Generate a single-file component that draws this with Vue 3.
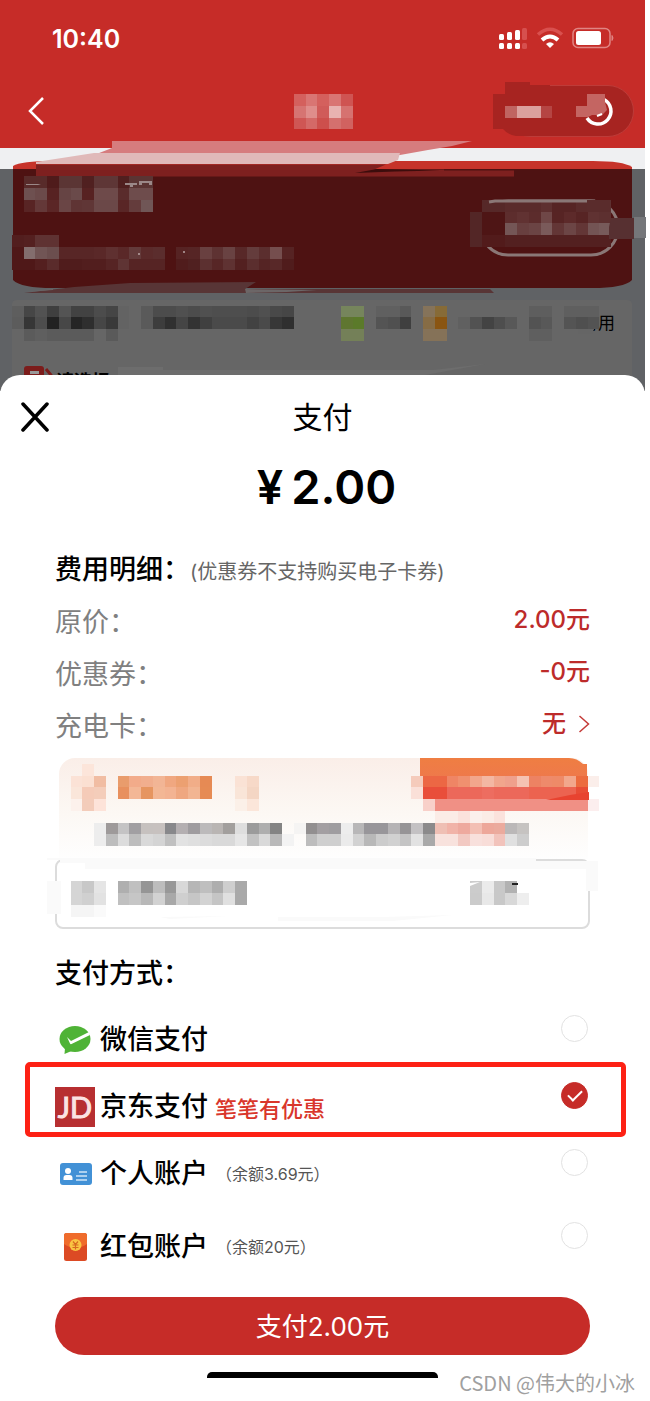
<script setup>
import { ref } from 'vue'

// Blurred regions: [column, row, colours of consecutive cells]; '-' leaves a gap.
const expand = (runs) =>
  runs.flatMap(([col, row, colours]) =>
    colours
      .split(' ')
      .map((fill, i) => ({ x: col + i, y: row, fill: '#' + fill }))
      .filter((cell) => cell.fill !== '#-')
  )

const navCells = expand([
  [25, 8, 'd4605d d97573 d4605d d97573 cf5452'],
  [25, 9, 'd67472 df8d8b d05b59 e8b3b1 d67270'],
  [25, 10, 'cf5654 d46967 cd4f4c d4706e d16260'],
  [43, 9, 'c06461 dba09d dba09d b54543']
])

const sceneCells = expand([
  [2, 15, '582b2a 582b2a 4f1b1b 5b3534 5b3534 502020 5e3636 5e3636 501f1f 5b3433 5b3433'],
  [2, 16, '6e5050 6b4a4a 572222 664444 6a4a4a 572222 6e4a4a 6e4a4a 5a2c2c 6e4c4c 6e4c4c'],
  [2, 17, '582424 643838 5b2626 6a4545 5f3434 603636 6b4848 6b4848 592626 643c3c 705656'],
  [1, 20, '521e1e 542020 5f3232 5f3232'],
  [1, 21, '4f1818 836e6e 715555 6b4e4e 582626 582626 582626 5a2828 5f3030 5a2828 633a3a 5b2a2a 5b2d2d - 562323 562525 694040 5e3232 694242 582828 643c3c 5b2e2e 754e4e 562323'],
  [1, 22, '4f1818 4f1818 541f1f 5a2b2b 501c1c 501c1c 521e1e 521e1e 562424 5f3434 562424 562424 562424 - 501c1c 502020 5c3030 572626 5f3232 532020 5b2e2e 552424 582828 501c1c'],
  [40, 18, '532626 4e1515 4e1515 5d2d2d 613232 5c2c2c 6f4747 572424 5d2a2a 572424 603232 5d3030'],
  [40, 19, '532626 4e1515 4e1515 745656 683f3f 6b4444 7a5a5a 633636 6c4545 633636 735454 775a5a'],
  [40, 20, '532626 521b1b 521b1b 532020 532020 532020 532020 532020 532020 532020 532020 532020'],
  [41, 17, '562828 562828 5a2b2b 5a2b2b 5a2b2b 5e3030 562424 562424 5a2b2b 5a2b2b 5d3030'],
  [1, 26, '5e5e5e 464646 525252 3f3f3f 545454 424242 424242 4c4c4c 454545 636363 - 5a5a5a 4c4c4c 4c4c4c 505050 4c4c4c 505050 4e4e4e 4e4e4e 4e4e4e 4c4c4c 505050 494949 464646'],
  [1, 27, '5c5c5c 363636 4d4d4d 222222 474747 252525 2e2e2e 464646 393939 636363 - 5a5a5a 3d3d3d 303030 454545 333333 404040 4a4a4a 4a4a4a 4a4a4a 424242 4a4a4a 373737 2f2f2f'],
  [2, 28, '5b5b5b 5f5f5f 5b5b5b 5b5b5b 5b5b5b 5b5b5b - 5a5a5a'],
  [29, 26, '76855c 76855c - 606060 606060 595959 - 85735a 876b37 - - - - - - - 5e5e5e 5e5e5e - 5f5f5f 5f5f5f 5f5f5f'],
  [29, 27, '5f7630 5b7a2a - 545454 505050 3f3f3f - 866c45 8a5511 - 606060 525252 434343 4e4e4e 585858 - 535353 585858 - 545454 4f4f4f 535353'],
  [29, 28, '748058 748058 - - - - - 857258 857258 - - - - - - - 5f5f5f 5f5f5f']
])

const promoCells = expand([
  [7, 65, 'fce5da'],
  [6, 66, 'fbe2d6 fbe0d2 f1bda3 - e99c6c f2ab8a f1ae8e f2b595 f0a780 eca071 f1ad88 e68a54 - - fae2d5 f7d9c8'],
  [6, 67, 'fae6da f5cbb8 f4cdba - e8905e f3b796 e69560 f3b795 f3b392 efa780 f2b592 e68b54 - - f9e5d8 f4d6c4'],
  [6, 68, 'fcf1ec f3ccba fde3d9 - - - - - - - - - - - fbf0e8 fbe6da'],
  [35, 66, 'f5cbbb ec6744 ec6744 ef8565 f0906f f2a68c f3b7a3 f1a58c efa08c f5c2b2 ed8263 ee8a6b ee8a68 f2a78c ec6b3e fbeeea'],
  [35, 67, 'fae0d8 e94e3a e94e3a ec685a ec685a ec685a ed6d60 ec685a ec685a ec685a ec6350 ec6350 ec6350 ec6350 e84c35'],
  [36, 68, 'f8d0c9 f09085 f09085 f09085 f09085 f09085 f09085 f09085 f09085 f09085 f09085 f09085 f09085 f09085 fceeee'],
  [37, 69, 'fbece6 fbece6 fbe2dc fbf0ec fbece6 fbe2dc'],
  [8, 70, 'ededed 9e9a9a c4c3c4 a19fa2 c6c1bf c7c1bf 88888b b4afb1 9f9c9f bcbabb b9b5b3 a29f9d dedede 9b9b9b aeaeae 848484 - f5f4f3 928f90 a39fa2 9f9da0 ededed b8b7b8 98969a 98969a b5b3b5 969496 c3c1c3 8b8a8b efbfb4 f1b3a8 eea99e f3bfb4 eda79a ebaa9d bbb8b8 c6c3c1'],
  [8, 71, 'ededed bdbdbd dcdcdc bdbdbd d9d9d9 d4d4d4 c0c0c0 e2e2e2 dfdfdf dcdcdc d9d9d9 d9d9d9 e6e6e6 c2c2c2 d9d9d9 b9b9b9 f3f3f3 - bdbdbd cfcfcf cfcfcf ebebeb d2d2d2 b8b8b8 cccccc d1d1d1 c4c4c4 e2e2e2 a9a9a9 f8e2dd f8e2dd f2c9c2 f8e0dc f8ddd8 f2c3bb e0e0e0 cdcdcd'],
  [6, 75, 'd5d5d5 c8c8c8 e5e5e5 - afafaf c0c0c0 959595 bdbdbd 989898 d8d8d8 b6b6b6 bfbfbf aeaeae cecece a9a9a9'],
  [6, 76, 'd5d5d5 d0d0d0 e2e2e2 - c0c0c0 c6c6c6 b8b8b8 d2d2d2 a8a8a8 cfcfcf c6c6c6 d3d3d3 c5c5c5 e0e0e0 a9a9a9'],
  [6, 77, 'f5f5f5 f5f5f5 fafafa'],
  [40, 75, 'cccccc ebebeb c8c8c8 b2b2b2'],
  [40, 76, 'cbcbcb e8e8e8 c8c8c8 d8d8d8 eeeeee']
])

const fees = [
  { label: '原价：', value: '2.00元' },
  { label: '优惠券：', value: '-0元' },
  { label: '充电卡：', value: '无', more: true }
]

const methods = [
  { id: 'wechat', name: '微信支付' },
  { id: 'jd', name: '京东支付', promo: '笔笔有优惠' },
  { id: 'personal', name: '个人账户', note: '（余额3.69元）' },
  { id: 'redpacket', name: '红包账户', note: '（余额20元）' }
]
const selected = ref('jd')
</script>

<template>
  <div class="page">
    <header class="top">
      <div class="status">
        <span class="clock">10:40</span>
        <svg class="status-icons" width="116" height="24" viewBox="0 0 116 24" aria-hidden="true">
          <g fill="#fff">
            <rect x="0" y="7" width="5" height="6" rx="1.5" />
            <rect x="8" y="5" width="5" height="8" rx="1.5" />
            <rect x="16" y="3" width="5" height="10" rx="1.5" />
            <rect x="0" y="16" width="5" height="6" rx="1.5" />
            <rect x="8" y="16" width="5" height="6" rx="1.5" />
            <rect x="16" y="16" width="5" height="6" rx="1.5" />
            <path d="M51 21L47 17Q51 13.500 55 17Z" />
            <rect x="77" y="4" width="25" height="14" rx="2.500" />
          </g>
          <rect x="23" y="1" width="5" height="12" rx="1.500" fill="#d6504e" />
          <rect x="23" y="16" width="5" height="6" rx="1.500" fill="#d6504e" />
          <path d="M39 7.500Q51 -3 63 7.500" fill="none" stroke="#d9504e" stroke-width="3.500" />
          <path d="M43 13Q51 6 59 13" fill="none" stroke="#fff" stroke-width="4" />
          <rect x="74" y="1.500" width="37" height="19" rx="5" fill="none" stroke="#e08583" stroke-width="1.500" />
          <path d="M113 8.500q2 2.500 0 5z" fill="#e08583" stroke="#e08583" />
        </svg>
      </div>
      <nav class="nav">
        <button class="back" type="button" aria-label="返回">
          <svg width="18" height="30" viewBox="0 0 18 30" aria-hidden="true">
            <path d="M16 2L3 15L16 28" fill="none" stroke="#fff" stroke-width="2.500" />
          </svg>
        </button>
        <div class="capsule"></div>
      </nav>
      <svg class="nav-art" viewBox="0 77 645 71" preserveAspectRatio="none" aria-hidden="true">
        <path d="M493 94h12V82h25v3h20v51h-34q-8-1-13-7h-10z" fill="#a72421" />
        <g transform="scale(11.75)" shape-rendering="crispEdges">
          <rect v-for="(c, i) in navCells" :key="i" :x="c.x" :y="c.y" width="1.02" height="1.02" :fill="c.fill" />
        </g>
        <path d="M604 99.500A13 13 0 1 1 587 118" fill="none" stroke="#fff" stroke-width="3.500" />
        <path d="M587 94h18v8l2 8-5 5h-10l-4 2h-12v-11h11z" fill="#c46562" />
        <path d="M597 116l5-2" stroke="#fff" stroke-width="2" />
      </svg>
    </header>

    <section class="scene">
      <svg class="scene-art" viewBox="0 141 650 250" preserveAspectRatio="none" aria-hidden="true">
        <rect x="0" y="148" width="645" height="21" fill="#eff0f2" />
        <rect x="0" y="169" width="645" height="222" fill="#606265" />
        <path d="M12 305q0-5 5-5h610q5 0 5 5v86H12z" fill="#666" />
        <path d="M13 170v-4q8-5 40-5h540q30 0 39 6v3z" fill="#c6332a" />
        <path d="M13 169h619v111q-8 8-40 8H53q-32 0-40-8z" fill="#4e1212" />
        <path d="M112 141h360l-20 5-24 4-28 5H94l18-7z" fill="#d67c7e" />
        <path d="M94 153h306l-2 7-10 4H36v-2z" fill="#e0b9b9" />
        <path d="M36 164.500h350l-12 5h70v1h70v6H36z" fill="#7e201f" />
        <path d="M355 173l22-4 63 1.500-45 1z" fill="#3c0d0c" />
        <path d="M24 293l50-6 56-4 126-1-11 7h245l4 4z" fill="#583536" />
        <path d="M25 292l28-3v1zM245 289l72 1-30 2-41 1z" fill="#6c6667" />
        <rect x="481" y="201" width="137" height="54" rx="27" fill="none" stroke="#8a7776" stroke-width="3" />
        <rect x="470" y="203" width="13" height="44" fill="#4e1212" />
        <g transform="scale(11.75)" shape-rendering="crispEdges">
          <rect v-for="(c, i) in sceneCells.filter((s) => s.y < 24)" :key="i" :x="c.x" :y="c.y" width="1.02" height="1.02" :fill="c.fill" />
        </g>
        <path d="M489 202l6-1h100" fill="none" stroke="#8a7776" stroke-width="3" />
        <path d="M587 200h23v12h-23z" fill="#5a2c2c" />
        <path d="M611 218h23v21h-25v-12z" fill="#573031" />
        <path d="M634 217h12v21h-12z" fill="#75777a" />
        <path d="M26 184h12l3 1H26zM125 183h12v2h-4v2h-3v-2h-5zM139 181h13v4h-3v-2h-7v2h-3z" fill="#9b8888" />
        <circle cx="139" cy="254" r="1" fill="#b9a5a5" />
        <circle cx="184" cy="252" r="1" fill="#b9a5a5" />
        <path d="M118 367h45v3h270l52-6-65 12H118z" fill="#6d6d6d" />
        <rect x="24" y="366" width="20" height="24" rx="3" fill="#7c1c1b" />
        <path d="M30 371h9v3h-9z" fill="#999" />
        <path d="M46 369l5 6v4" fill="none" stroke="#7c1c1b" stroke-width="3" />
      </svg>
      <p class="usable">可用</p>
      <p class="choose">请选择</p>
      <svg class="scene-art" viewBox="0 141 650 250" preserveAspectRatio="none" aria-hidden="true">
        <path d="M578 310h19v12l-5 12h-14z" fill="#656565" />
        <g transform="scale(11.75)" shape-rendering="crispEdges">
          <rect v-for="(c, i) in sceneCells.filter((s) => s.y > 24)" :key="i" :x="c.x" :y="c.y" width="1.02" height="1.02" :fill="c.fill" />
        </g>
      </svg>
    </section>

    <main class="sheet">
      <div class="sheet-head">
        <button class="close" type="button" aria-label="关闭">
          <svg width="28" height="30" viewBox="0 0 28 30" aria-hidden="true">
            <path d="M2 2L26 28M26 2L2 28" stroke="#000" stroke-width="3.500" stroke-linecap="round" />
          </svg>
        </button>
        <h1>支付</h1>
      </div>
      <p class="amount"><span>¥</span><span>2.00</span></p>

      <section class="fees">
        <h2>费用明细：<small>(优惠券不支持购买电子卡券)</small></h2>
        <dl>
          <div v-for="fee in fees" :key="fee.label" class="fee">
            <dt>{{ fee.label }}</dt>
            <dd>
              {{ fee.value }}
              <svg v-if="fee.more" width="12" height="18" viewBox="0 0 12 18" aria-hidden="true">
                <path d="M1.500 1L10.500 9L1.500 17" fill="none" stroke="#c43a37" stroke-width="1.500" />
              </svg>
            </dd>
          </div>
        </dl>
      </section>

      <section class="offers">
        <div class="member-card"></div>
        <div class="coupon-box"></div>
        <svg class="offers-art" viewBox="0 755 645 180" preserveAspectRatio="none" aria-hidden="true">
          <defs>
            <linearGradient id="ribbon" x1="0" y1="0" x2="0" y2="1">
              <stop offset="0" stop-color="#ef7e42" />
              <stop offset="1" stop-color="#ee7650" />
            </linearGradient>
          </defs>
          <path d="M420 758h149q8 0 14 6h4v24H420z" fill="url(#ribbon)" />
          <path d="M47 858h489v3h62v29h-9v-21H85v-6H60v-3h-13z" fill="#fafafa" />
          <rect x="47" y="881" width="14" height="33" fill="#fafafa" />
          <rect x="586" y="862" width="12" height="29" fill="#fafafa" />
          <path d="M278 917h105l70-2-60 6H278zM160 917l70-1-60 3z" fill="#fafafa" />
          <g transform="scale(11.75)" shape-rendering="crispEdges">
            <rect v-for="(c, i) in promoCells" :key="i" :x="c.x" :y="c.y" width="1.02" height="1.02" :fill="c.fill" />
          </g>
          <path d="M546 800l24-5 19-3v8z" fill="#e84330" />
          <path d="M470 883l10-1-10 4z" fill="#fff" />
          <rect x="512" y="883" width="6" height="2" fill="#222" />
        </svg>
      </section>

      <fieldset class="methods">
        <legend>支付方式：</legend>
        <div v-for="m in methods" :key="m.id" class="method" :class="m.id">
          <label :for="m.id">
            <svg v-if="m.id === 'wechat'" width="40" height="40" viewBox="0 0 40 40" aria-hidden="true">
              <ellipse cx="20" cy="19" rx="15.500" ry="13" fill="#4fb336" />
              <path d="M10 28l-.5 6 7-3z" fill="#4fb336" />
              <path d="M12 17l4 4L34 12l1 3-18.500 9q-1 .5-1.500-.5z" fill="#fff" />
            </svg>
            <svg v-else-if="m.id === 'jd'" width="40" height="40" viewBox="0 0 40 40" aria-hidden="true">
              <rect width="40" height="40" fill="#b72f31" />
              <text x="20" y="31" text-anchor="middle" class="jd-mark">JD</text>
            </svg>
            <svg v-else-if="m.id === 'personal'" width="40" height="40" viewBox="0 0 40 40" aria-hidden="true">
              <rect x="5" y="9" width="32" height="22" rx="3" fill="#4291d6" />
              <circle cx="13" cy="17" r="3" fill="#fff" />
              <path d="M8.500 26v-2q0-3 3-3h3q3 0 3 3v2z" fill="#fff" />
              <path d="M24 18h8M21 22h11M21 26h11" stroke="#cfe5f8" stroke-width="1.500" />
            </svg>
            <svg v-else width="40" height="40" viewBox="0 0 40 40" aria-hidden="true">
              <rect x="9" y="6" width="23" height="28" rx="2.500" fill="#dc4a24" />
              <path d="M9 17V8.500Q9 6 11.500 6h18Q32 6 32 8.500V17Q20.500 25 9 17z" fill="#ef6c2c" />
              <circle cx="20.500" cy="18" r="6" fill="#f9c543" />
              <path d="M18 14.500l2.500 3 2.500-3M17.500 18h6M17.500 20.500h6M20.500 17.500v5" fill="none" stroke="#d76a20" stroke-width="1.200" />
            </svg>
            <span class="name">{{ m.name }}</span>
            <span v-if="m.promo" class="promo">{{ m.promo }}</span>
            <span v-if="m.note" class="note">{{ m.note }}</span>
          </label>
          <input :id="m.id" v-model="selected" type="radio" name="method" :value="m.id" />
        </div>
      </fieldset>

      <button class="pay" type="button">支付2.00元</button>
      <div class="home-bar"></div>
    </main>
    <p class="watermark">CSDN @伟大的小冰</p>
  </div>
</template>

<style>
body {
  margin: 0;
  background: #fff;
}
</style>

<style scoped>
.page {
  position: relative;
  padding-right: 5px;
  font-family: Inter, "Noto Sans CJK SC", sans-serif;
  color: #000;
  overflow: hidden;
}
h1, h2, p, dl, dd, fieldset, legend {
  margin: 0;
  padding: 0;
  border: 0;
}
button {
  border: 0;
  padding: 0;
  background: none;
  font-family: inherit;
}
svg {
  display: block;
  flex: none;
}
.top {
  position: relative;
  background: #c62c28;
}
.status {
  display: flex;
  align-items: center;
  justify-content: space-between;
  height: 77px;
  padding: 0 30px 0 52px;
}
.clock {
  font-size: 25px;
  font-weight: 600;
  color: #fff;
}
.nav {
  box-sizing: border-box;
  display: flex;
  align-items: center;
  justify-content: space-between;
  height: 71px;
  padding: 0 11px 4px 27px;
}
.capsule {
  box-sizing: border-box;
  width: 130px;
  height: 52px;
  border: 1px solid #bd3c39;
  border-radius: 26px;
  background: #a72421;
}
.nav-art {
  position: absolute;
  left: 0;
  bottom: 0;
  width: 100%;
  height: 71px;
  pointer-events: none;
}
.scene {
  position: relative;
  display: flex;
  flex-direction: column;
  height: 243px;
}
.scene-art {
  position: absolute;
  left: 0;
  bottom: 0;
  width: calc(100% + 5px);
  height: 250px;
}
.usable, .choose {
  position: relative;
}
.usable {
  margin: 163px 30px 0 0;
  font-size: 17px;
  line-height: 24px;
  text-align: right;
}
.choose {
  margin: 35px 0 0 56px;
  font-size: 18px;
  font-weight: 700;
  line-height: 24px;
}
.sheet {
  position: relative;
  margin-top: -16px;
  padding: 0 55px 23px;
  border-radius: 20px 20px 0 0;
  background: #fff;
}
.sheet-head {
  display: grid;
  grid-template-columns: 28px 1fr 28px;
  align-items: center;
  height: 84px;
  margin: 0 -34px;
}
h1 {
  font-size: 30px;
  font-weight: 400;
  line-height: 40px;
  text-align: center;
}
.amount {
  display: flex;
  justify-content: center;
  gap: 8px;
  padding-left: 8px;
  font-size: 47px;
  font-weight: 600;
  line-height: 56px;
}
.fees {
  margin-top: 29px;
}
h2 {
  height: 50px;
  font-size: 27px;
  font-weight: 500;
  line-height: 52px;
}
h2 small {
  font-size: 20px;
  font-weight: 400;
  color: #666;
}
.fee {
  display: flex;
  align-items: center;
  justify-content: space-between;
  height: 52px;
}
.fee dt {
  font-size: 27px;
  color: #808080;
}
.fee dd {
  display: flex;
  align-items: center;
  gap: 12px;
  font-size: 24px;
  font-weight: 500;
  line-height: 32px;
  color: #bd2b2a;
}
.offers {
  position: relative;
  margin-top: 8px;
}
.member-card {
  height: 101px;
  margin: 0 2px 0 4px;
  border-radius: 16px 16px 0 0;
  background: linear-gradient(#faeee8, #fcf8f4 55%, #fefefe);
}
.coupon-box {
  box-sizing: border-box;
  height: 70px;
  border: 2px solid #dcdcdc;
  border-radius: 8px;
}
.offers-art {
  position: absolute;
  top: -3px;
  left: -55px;
  width: calc(100% + 110px);
  height: 180px;
}
.methods {
  margin-top: 24px;
}
legend {
  height: 53px;
  font-size: 27px;
  font-weight: 500;
  line-height: 42px;
}
.method {
  position: relative;
  display: flex;
  align-items: center;
  justify-content: space-between;
  height: 67px;
}
.method.redpacket {
  margin-top: 6px;
}
.method.jd::after {
  content: "";
  position: absolute;
  inset: -11px -36px 3px -30px;
  border: 5px solid #fd2114;
  border-radius: 5px;
  pointer-events: none;
}
.method label {
  display: flex;
  align-items: center;
}
.name {
  margin-left: 5px;
  font-size: 27px;
  font-weight: 500;
  line-height: 42px;
}
.promo {
  margin-left: 7px;
  font-size: 22px;
  font-weight: 500;
  color: #d9362b;
}
.note {
  margin-left: 8px;
  font-size: 16px;
  line-height: 28px;
  color: #555;
}
.jd-mark {
  font: 400 29px Lato, sans-serif;
  fill: #fbe3e3;
  stroke: #fbe3e3;
}
input {
  position: relative;
  align-self: flex-start;
  box-sizing: border-box;
  width: 27px;
  height: 27px;
  margin: 9px 2px 0 0;
  border: 1px solid #e2e2e2;
  border-radius: 50%;
  background: #fff;
  appearance: none;
}
input:checked {
  border-color: #c62c28;
  background: #c62c28;
}
input:checked::after {
  content: "";
  position: absolute;
  top: 7px;
  left: 6px;
  width: 12px;
  height: 6px;
  border: solid #fff;
  border-width: 0 0 2px 2px;
  transform: rotate(-45deg);
}
.pay {
  display: block;
  width: 100%;
  height: 58px;
  margin-top: 17px;
  padding-bottom: 3px;
  border-radius: 29px;
  background: #c62c28;
  font-size: 26px;
  color: #fff;
}
.home-bar {
  width: 43%;
  height: 6px;
  margin: 17px auto 0;
  border-radius: 5px 5px 0 0;
  background: #000;
}
.watermark {
  position: absolute;
  right: 15px;
  bottom: 4px;
  font: 400 20px/28px "Noto Sans CJK SC", sans-serif;
  color: #a0a0a0;
}
</style>
